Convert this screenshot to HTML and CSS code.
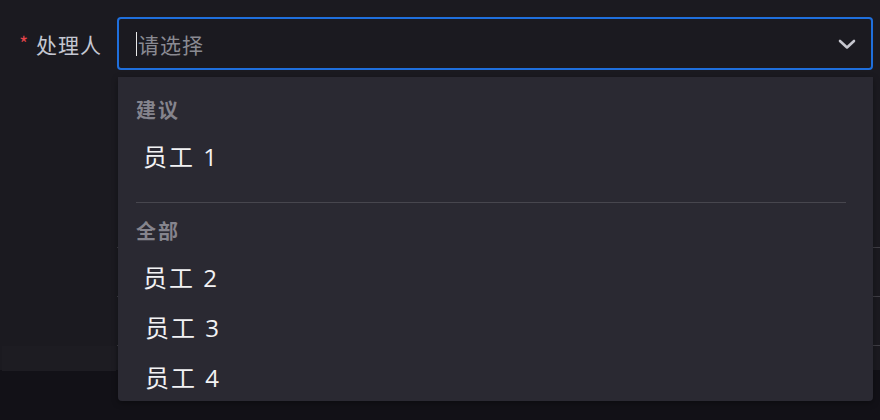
FILE: index.html
```html
<!DOCTYPE html>
<html lang="zh">
<head>
<meta charset="utf-8">
<link rel="stylesheet" href="styles.css">
</head>
<body>
<div class="page">
  <div class="panel">
    <div class="form-row">
      <label class="label"><span class="star">*</span>处理人</label>
      <div class="select">
        <span class="caret"></span>
        <span class="placeholder">请选择</span>
        <svg class="chevron" width="20" height="14" viewBox="0 0 20 14"><path d="M3 4 L10 10.5 L17 4" fill="none" stroke="#c6c6ce" stroke-width="2.6" stroke-linecap="round" stroke-linejoin="round"/></svg>
      </div>
    </div>
    <div class="table">
      <div class="row"></div>
      <div class="row"></div>
      <div class="row"></div>
    </div>
    <div class="footer">
      <div class="footer-cell"></div>
    </div>
  </div>
  <div class="bottom"></div>

  <div class="dropdown">
    <div class="group">建议</div>
    <div class="item">员工 1</div>
    <div class="divider"></div>
    <div class="group group-2">全部</div>
    <div class="item">员工 2</div>
    <div class="item shift">员工 3</div>
    <div class="item shift">员工 4</div>
  </div>
</div>
</body>
</html>
```
FILE: styles.css
```css
html, body {
  margin: 0;
  padding: 0;
  background: #121117;
  font-family: "Open Sans", "Noto Sans CJK SC", sans-serif;
}
.page {
  position: relative;
  width: 880px;
  height: 420px;
  overflow: hidden;
}
.panel {
  height: 370px;
  background: #1b1a20;
}
.bottom {
  height: 50px;
  background: #121117;
}
.form-row {
  display: flex;
  padding-top: 17px;
}
.label {
  width: 117px;
  box-sizing: border-box;
  padding-right: 15px;
  display: flex;
  justify-content: flex-end;
  align-items: center;
  height: 53px;
  font-family: "Noto Sans CJK SC", sans-serif;
  font-size: 21px;
  letter-spacing: 1px;
  color: #c4c7d2;
}
.star {
  color: #e5454b;
  font-size: 19px;
  margin-right: 7px;
  position: relative;
  top: -1px;
}
.select {
  position: relative;
  width: 756px;
  height: 53px;
  box-sizing: border-box;
  border: 2px solid #1f6fdc;
  border-radius: 4px;
  background: #1b1a20;
  display: flex;
  align-items: center;
  padding-left: 17px;
}
.caret {
  width: 1px;
  height: 24px;
  background: #e8e8e8;
  margin-right: 1px;
}
.placeholder {
  font-family: "Noto Sans CJK SC", sans-serif;
  font-size: 21px;
  letter-spacing: 1px;
  color: #8a8a92;
}
.chevron {
  position: absolute;
  right: 14px;
  top: 18px;
}
.table {
  margin-left: 117px;
}
.row {
  height: 48px;
  border-bottom: 1px solid #3f3e45;
}
.table .row:first-child {
  height: 177px;
}
.footer {
  height: 25px;
  padding-left: 2px;
  display: flex;
}
.footer-cell {
  width: 114px;
  background: #1d1c22;
}
.dropdown {
  position: absolute;
  left: 118px;
  top: 77px;
  width: 755px;
  height: 324px;
  box-sizing: border-box;
  background: #2a2932;
  border-radius: 0 0 4px 4px;
  padding: 21px 27px 0 18px;
  overflow: hidden;
  box-shadow: 0 2px 6px rgba(0,0,0,0.35);
}
.group {
  height: 24px;
  line-height: 24px;
  font-family: "Noto Sans CJK SC", sans-serif;
  font-size: 20px;
  letter-spacing: 2px;
  font-weight: 700;
  color: #85848d;
}
.group-2 {
  margin-top: 16px;
}
.item {
  height: 50px;
  line-height: 50px;
  font-size: 24px;
  letter-spacing: 2px;
  color: #f2f2f4;
  padding-left: 7px;
}
.group + .item {
  margin-top: 10px;
}
.item.shift {
  padding-left: 9px;
}
.divider {
  height: 1px;
  background: #47464e;
  margin-top: 20px;
}
```
